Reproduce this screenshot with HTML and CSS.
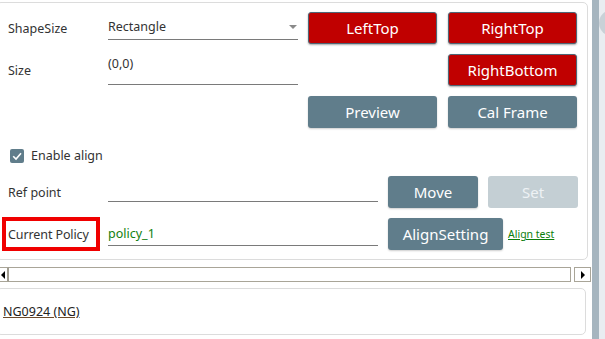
FILE: index.html
```html
<!DOCTYPE html>
<html lang="en">
  <head>
    <meta charset="UTF-8" />
    <meta name="viewport" content="width=device-width, initial-scale=1.0" />
    <link rel="stylesheet" href="styles.css">
  </head>
  <body>
    <div id="window">
      <div id="main">
        <div class="panel">
          <div class="row">
            <div class="label">ShapeSize</div>
            <div class="field field-select">
              <span>Rectangle</span>
              <span class="caret"></span>
            </div>
            <button class="btn btn-red btn-wide">LeftTop</button>
            <button class="btn btn-red btn-wide btn-far">RightTop</button>
          </div>

          <div class="row">
            <div class="label">Size</div>
            <div class="field field-area"><span>(0,0)</span></div>
            <div class="spacer-wide"></div>
            <button class="btn btn-red btn-wide btn-far">RightBottom</button>
          </div>

          <div class="row">
            <div class="label"></div>
            <div class="field-blank"></div>
            <button class="btn btn-slate btn-wide">Preview</button>
            <button class="btn btn-slate btn-wide btn-far">Cal Frame</button>
          </div>

          <div class="row check-row">
            <span class="checkbox">
              <svg width="14" height="14" viewBox="0 0 14 14">
                <rect width="14" height="14" rx="2" fill="#607d8b" />
                <path d="M3.2 7.2 L6 10 L11 4.2" fill="none" stroke="#fff" stroke-width="1.6" />
              </svg>
            </span>
            <span class="check-text">Enable align</span>
          </div>

          <div class="row">
            <div class="label">Ref point</div>
            <div class="field field-long field-ref"></div>
            <button class="btn btn-slate btn-small">Move</button>
            <button class="btn btn-disabled btn-small">Set</button>
          </div>

          <div class="row">
            <div class="label label-marked">Current Policy</div>
            <div class="field field-long field-policy"><span>policy_1</span></div>
            <button class="btn btn-slate btn-align">AlignSetting</button>
            <a class="link" href="#">Align test</a>
          </div>
        </div>

        <div class="hscroll">
          <div class="hscroll-left"><span class="arrow-left"></span></div>
          <div class="hscroll-track"></div>
          <div class="hscroll-right"><span class="arrow-right"></span></div>
        </div>

        <div class="panel panel-bottom">
          <a class="result" href="#">NG0924 (NG)</a>
        </div>
      </div>

      <div id="side">
        <div class="side-bar"></div>
        <div class="side-light"><div class="side-knob"></div></div>
      </div>
    </div>
  </body>
</html>
```

FILE: styles.css
```css
body {
  font-family: "Noto Sans", "Open Sans", sans-serif;
  font-size: 12.5px;
  color: #333;
  background-color: #fff;
  margin: 0;
  padding: 0;
  overflow: hidden;
}

#window {
  display: flex;
  width: 605px;
  height: 339px;
  overflow: hidden;
}

#main {
  width: 592px;
  padding-top: 2px;
  display: flex;
  flex-direction: column;
}

.panel {
  margin-left: -4px;
  width: 592px;
  height: 258px;
  box-sizing: border-box;
  border: 1px solid #dcdcdc;
  border-radius: 5px;
  padding: 9px 0 0 5px;
  display: flex;
  flex-direction: column;
  gap: 10px;
}

.row {
  display: flex;
  align-items: center;
  height: 32px;
}

.label {
  width: 98px;
  box-sizing: border-box;
  padding-left: 6px;
  flex-shrink: 0;
}

.label-marked {
  height: 34px;
  border: 4px solid #f00000;
  padding-left: 2px;
  display: flex;
  align-items: center;
  white-space: nowrap;
  letter-spacing: -0.1px;
}

.field {
  margin-left: 8px;
  box-sizing: border-box;
  border-bottom: 1px solid #7a7a7a;
  display: flex;
  align-items: center;
  align-self: flex-start;
  flex-shrink: 0;
}

.field-select {
  width: 190px;
  height: 26px;
  margin-top: 2px;
  justify-content: space-between;
}

.caret {
  width: 0;
  height: 0;
  border-left: 4px solid transparent;
  border-right: 4px solid transparent;
  border-top: 4px solid #8a8a8a;
  margin-right: 1px;
}

.field-area {
  width: 190px;
  height: 31px;
  align-items: flex-start;
  padding-top: 1px;
}

.field-blank {
  width: 190px;
  margin-left: 8px;
}

.spacer-wide {
  width: 129px;
  margin-left: 10px;
}

.field-long {
  width: 270px;
}

.field-ref {
  height: 26px;
}

.field-policy {
  height: 24px;
  margin-top: 4px;
  color: #13800f;
}

.btn {
  height: 32px;
  box-sizing: border-box;
  border: none;
  border-radius: 3px;
  font-family: "Noto Sans", "Open Sans", sans-serif;
  font-size: 15px;
  color: #fff;
  padding: 0;
  margin-left: 10px;
  flex-shrink: 0;
}

.btn-wide {
  width: 129px;
}

.btn-far {
  margin-left: 11px;
}

.btn-small {
  width: 90px;
}

.btn-align {
  width: 115px;
}

.btn-red {
  background-color: #c00000;
  border: 1px solid #4e6676;
  box-shadow: 0 1px 2px rgba(0, 0, 0, 0.35);
}

.btn-slate {
  background-color: #607d8b;
  box-shadow: 0 1px 2px rgba(0, 0, 0, 0.2);
}

.btn-disabled {
  background-color: #c4cfd4;
  color: #eef2f4;
}

.check-row {
  height: 28px;
  align-items: flex-end;
  padding-bottom: 3px;
  box-sizing: border-box;
}

.checkbox {
  display: flex;
  margin-left: 8px;
}

.check-text {
  margin-left: 7px;
  line-height: 14px;
}

.link {
  margin-left: 5px;
  font-size: 10.5px;
  color: #0b7d0b;
  text-decoration: underline;
  align-self: flex-end;
  margin-bottom: 9px;
}

.hscroll {
  display: flex;
  height: 15px;
  margin-top: 7px;
  width: 591px;
}

.hscroll-left {
  width: 9px;
  box-sizing: border-box;
  border-top: 1px solid #a9a598;
  border-bottom: 1px solid #a9a598;
  border-right: 2px solid #a09c90;
  display: flex;
  align-items: center;
}

.arrow-left {
  width: 0;
  height: 0;
  border-top: 4px solid transparent;
  border-bottom: 4px solid transparent;
  border-right: 4px solid #000;
  margin-left: 1px;
}

.hscroll-track {
  flex: 1;
  border-top: 1px solid #a9a598;
  border-bottom: 1px solid #a9a598;
  border-right: 1px solid #a9a598;
}

.hscroll-right {
  width: 17px;
  margin-left: 3px;
  box-sizing: border-box;
  border: 1px solid #a9a598;
  display: flex;
  align-items: center;
  justify-content: center;
}

.arrow-right {
  width: 0;
  height: 0;
  border-top: 4px solid transparent;
  border-bottom: 4px solid transparent;
  border-left: 4px solid #000;
}

.panel-bottom {
  margin-top: 6px;
  width: 590px;
  height: 47px;
  padding: 0 0 0 6px;
  justify-content: center;
}

.result {
  color: #222;
  text-decoration: underline;
  text-decoration-color: #6b4a2a;
}

#side {
  display: flex;
  width: 13px;
}

.side-bar {
  width: 7px;
  background-color: #a6b5bf;
}

.side-light {
  width: 6px;
  background-color: #e9edf1;
  overflow: hidden;
  padding-top: 10px;
}

.side-knob {
  width: 26px;
  height: 26px;
  border-radius: 50%;
  background-color: #c9d1d7;
}
```
